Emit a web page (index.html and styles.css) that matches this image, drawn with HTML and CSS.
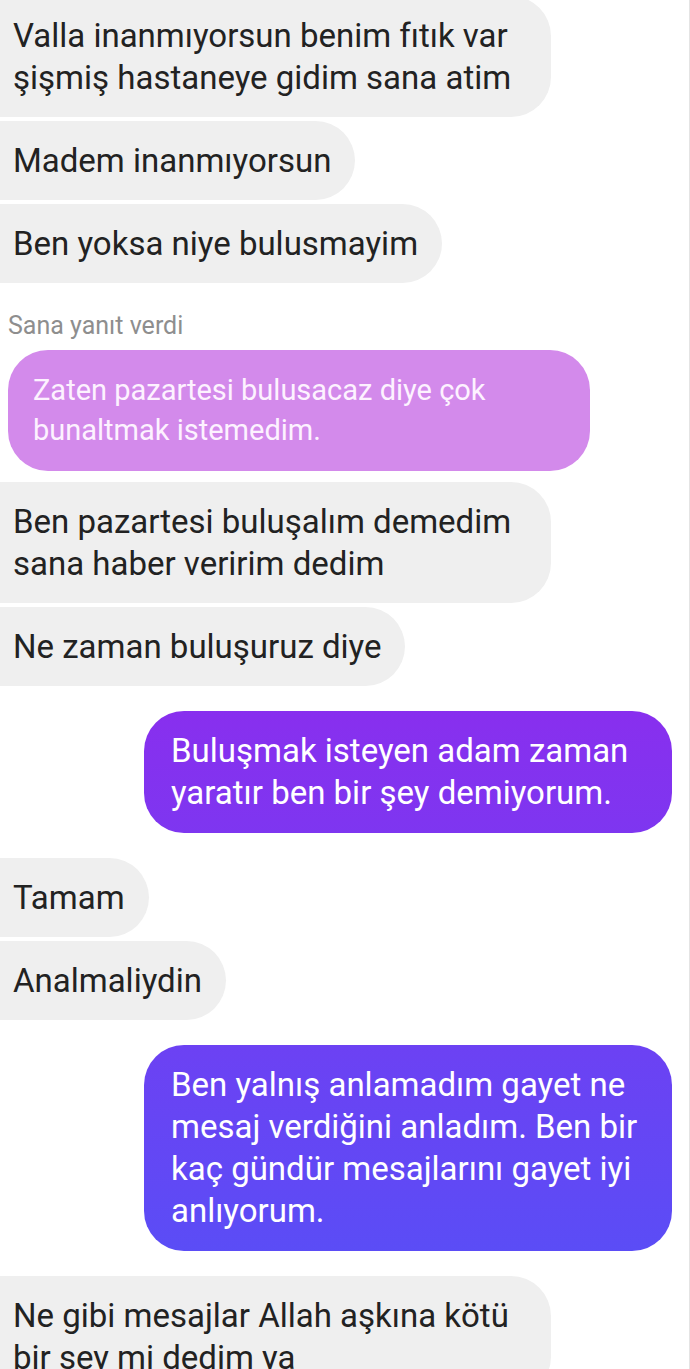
FILE: index.html
```html
<!DOCTYPE html>
<html lang="tr">

<head>
    <meta charset="UTF-8">
    <meta name="viewport" content="width=device-width, initial-scale=1.0">
    <title>Sohbet</title>
    <link rel="stylesheet" href="styles.css">
</head>

<body>

    <div class="thread">
        <div class="msg msg-in">
            <div class="bubble">Valla inanmıyorsun benim fıtık var şişmiş hastaneye gidim sana atim</div>
        </div>
        <div class="msg msg-in">
            <div class="bubble">Madem inanmıyorsun</div>
        </div>
        <div class="msg msg-in">
            <div class="bubble">Ben yoksa niye bulusmayim</div>
        </div>

        <div class="reply-group">
            <div class="reply-label">Sana yanıt verdi</div>
            <div class="reply-quote">Zaten pazartesi bulusacaz diye çok bunaltmak istemedim.</div>
        </div>

        <div class="msg msg-in after-reply">
            <div class="bubble">Ben pazartesi buluşalım demedim sana haber veririm dedim</div>
        </div>
        <div class="msg msg-in">
            <div class="bubble">Ne zaman buluşuruz diye</div>
        </div>

        <div class="msg msg-out new-group">
            <div class="bubble">Buluşmak isteyen adam zaman yaratır ben bir şey demiyorum.</div>
        </div>

        <div class="msg msg-in new-group">
            <div class="bubble">Tamam</div>
        </div>
        <div class="msg msg-in">
            <div class="bubble">Analmaliydin</div>
        </div>

        <div class="msg msg-out new-group">
            <div class="bubble">Ben yalnış anlamadım gayet ne mesaj verdiğini anladım. Ben bir kaç gündür mesajlarını gayet iyi anlıyorum.</div>
        </div>

        <div class="msg msg-in new-group">
            <div class="bubble">Ne gibi mesajlar Allah aşkına kötü bir sey mi dedim ya</div>
        </div>
    </div>

</body>

</html>
```

FILE: styles.css
```css
/* Page */
body {
    margin: 0;
    background: #ffffff;
    font-family: 'Roboto', 'Noto Sans', sans-serif;
    overflow: hidden;
}

.thread {
    display: flex;
    flex-direction: column;
    gap: 4px;
    margin-top: -4px;
    min-height: 100vh;
    border-right: 1px solid #e4e4e4;
    box-sizing: border-box;
}

/* Message rows */
.msg {
    display: flex;
}

.msg-in {
    justify-content: flex-start;
}

.msg-out {
    justify-content: flex-end;
    padding-right: 17px;
}

.new-group {
    margin-top: 21px;
}

.after-reply {
    margin-top: 7px;
}

/* Bubbles */
.bubble {
    font-size: 33px;
    line-height: 42px;
    border-radius: 40px;
    box-sizing: border-box;
}

.msg-in .bubble {
    background: #efefef;
    color: #222222;
    padding: 19px 24px 18px 13px;
    max-width: 551px;
    border-top-left-radius: 0;
    border-bottom-left-radius: 0;
}

.msg-out .bubble {
    color: #ffffff;
    padding: 19px 24px 19px 27px;
    max-width: 528px;
    background-color: #7a3af0;
    background-image: linear-gradient(180deg, #8a2eee 690px, #5a4df6 1260px);
    background-attachment: fixed;
}

/* Reply block */
.reply-group {
    margin-top: 24px;
    padding-left: 8px;
}

.reply-label {
    font-size: 25px;
    line-height: 30px;
    color: #8e8e8e;
    margin-bottom: 9px;
}

.reply-quote {
    width: 582px;
    box-sizing: border-box;
    background: #d38aeb;
    color: #fdf2ff;
    font-size: 29px;
    line-height: 40px;
    padding: 20px 25px 21px 25px;
    border-radius: 40px;
}
```
